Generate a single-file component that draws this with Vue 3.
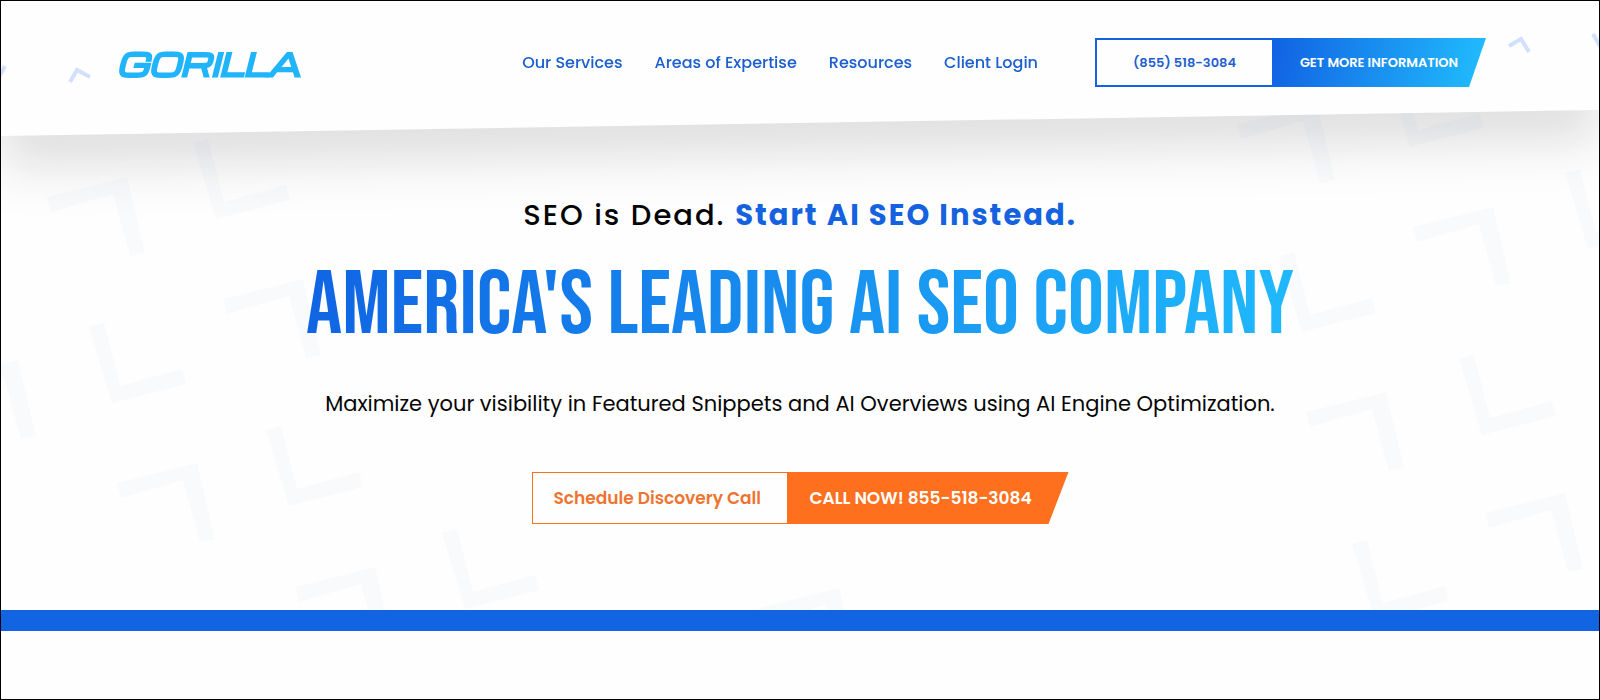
<script setup>
const navItems = ['Our Services', 'Areas of Expertise', 'Resources', 'Client Login']

const lowerAngles = [
  [112, 403], [289, 506], [216, 219], [465, 609],
  [1302, 332], [1482, 435], [1375, 620], [1410, 147], [1588, 249],
]
const upperAngles = [
  [303, 279], [127, 177], [197, 463], [375, 567], [18, 360],
  [1493, 207], [1386, 392], [1565, 493], [1317, 104], [839, 588],
]
</script>

<template>
  <div class="page">
    <div class="header-shadow">
      <header class="header">
        <svg class="ticks" viewBox="0 0 1598 135" preserveAspectRatio="xMidYMin slice" aria-hidden="true">
          <path d="M69 81 76 69 89 76M-2 76 4 65M1508 45 1520 38 1528 51M1592 33 1600 47" />
        </svg>
        <a class="logo" href="#">GORILLA</a>
        <nav class="nav" aria-label="Main">
          <a v-for="item in navItems" :key="item" href="#">{{ item }}</a>
        </nav>
        <div class="actions">
          <a class="phone" href="tel:8555183084">(855) 518-3084</a>
          <a class="info" href="#">GET MORE INFORMATION</a>
        </div>
      </header>
    </div>

    <main class="hero">
      <svg class="pattern" viewBox="1 110 1598 500" preserveAspectRatio="xMidYMin slice" aria-hidden="true">
        <polygon
          v-for="([x, y], i) in lowerAngles"
          :key="'l' + i"
          points="0,0 -23,-76 -8,-80 8,-17 70,-34 74,-19"
          :transform="`translate(${x} ${y})`"
        />
        <polygon
          v-for="([x, y], i) in upperAngles"
          :key="'u' + i"
          points="0,0 18,76 3,79 -14,17 -76,35 -80,20"
          :transform="`translate(${x} ${y})`"
        />
      </svg>
      <p class="tagline">SEO is Dead. <strong>Start AI SEO Instead.</strong></p>
      <h1 class="title">AMERICA'S LEADING AI SEO COMPANY</h1>
      <p class="lead">Maximize your visibility in Featured Snippets and AI Overviews using AI Engine Optimization.</p>
      <div class="cta">
        <a class="schedule" href="#">Schedule Discovery Call</a>
        <a class="call" href="tel:8555183084">CALL NOW! 855-518-3084</a>
      </div>
    </main>
    <div class="band"></div>
  </div>
</template>

<style>
body {
  background: #fff;
}
</style>

<style scoped>
.page {
  box-sizing: border-box;
  min-height: 100vh;
  border: 1px solid #000;
  overflow: hidden;
  background: #fefefe;
  color: #050505;
  font-family: Poppins, Inter, sans-serif;
}

a {
  text-decoration: none;
  white-space: nowrap;
}

.header-shadow {
  position: relative;
  z-index: 1;
  filter: drop-shadow(0 32px 24px rgba(20, 26, 32, 0.13));
}

.header {
  position: relative;
  box-sizing: border-box;
  display: flex;
  align-items: center;
  height: 135px;
  padding: 0 113px 12px 116px;
  background: #fefefe;
  clip-path: polygon(0 0, 100% 0, 100% 109px, 0 100%);
}

.ticks {
  position: absolute;
  inset: 0;
  width: 100%;
  height: 100%;
  fill: none;
  stroke: #d2e1fb;
  stroke-width: 4;
}

.logo {
  position: relative;
  color: #20b4fa;
  font-family: Michroma, Orbitron, "DejaVu Sans", sans-serif;
  font-size: 30px;
  font-style: italic;
  font-weight: 900;
  line-height: 40px;
  -webkit-text-stroke: 2px #20b4fa;
}

.nav {
  position: relative;
  display: flex;
  gap: 32px;
  margin-left: auto;
}

.nav a {
  color: #1b5fd0;
  font-size: 16px;
  font-weight: 500;
  line-height: 24px;
}

.actions {
  position: relative;
  box-sizing: border-box;
  display: flex;
  width: 391px;
  height: 49px;
  margin-left: 57px;
  padding: 2px 0 2px 2px;
  background: linear-gradient(100deg, #1163e3 45%, #20b9fc 97%);
  clip-path: polygon(0 0, 100% 0, calc(100% - 17px) 100%, 0 100%);
  font-size: 13px;
  font-weight: 600;
}

.actions a {
  display: flex;
  align-items: center;
  justify-content: center;
}

.phone {
  flex: 0 0 175px;
  background: #fefefe;
  color: #1f5fd0;
}

.info {
  flex: 1;
  color: #fff;
}

.hero {
  position: relative;
  box-sizing: border-box;
  display: flex;
  flex-direction: column;
  align-items: center;
  height: 500px;
  margin-top: -26px;
  padding-top: 84px;
  text-align: center;
}

.pattern {
  position: absolute;
  inset: 0;
  width: 100%;
  height: 100%;
  fill: #f8fafc;
}

.hero > :not(.pattern) {
  position: relative;
}

.tagline {
  margin: 0;
  font-size: 29px;
  font-weight: 500;
  letter-spacing: 2px;
  line-height: 42px;
}

.tagline strong {
  color: #1462e0;
  font-weight: 700;
}

.title {
  margin: 24px 0 0;
  background: linear-gradient(95deg, #1064e3, #20b9fc);
  background-clip: text;
  -webkit-background-clip: text;
  color: transparent;
  font-family: "Bebas Neue", "Roboto Condensed", "Liberation Sans Narrow", Roboto, sans-serif;
  font-size: 90px;
  font-weight: 400;
  line-height: 92px;
}

.lead {
  margin: 35px 0 0;
  font-size: 21px;
  line-height: 34px;
}

.cta {
  box-sizing: border-box;
  display: flex;
  width: 537px;
  height: 52px;
  margin-top: 51px;
  padding: 1px 0 1px 1px;
  background: #fe6f1e;
  clip-path: polygon(0 0, 100% 0, calc(100% - 20px) 100%, 0 100%);
  font-size: 17px;
  font-weight: 600;
}

.cta a {
  display: flex;
  align-items: center;
}

.schedule {
  box-sizing: border-box;
  flex: 0 0 254px;
  padding-left: 21px;
  background: #fefefe;
  color: #ee7430;
}

.call {
  padding-left: 23px;
  color: #fff;
}

.band {
  position: relative;
  height: 21px;
  background: #1264e3;
}
</style>
